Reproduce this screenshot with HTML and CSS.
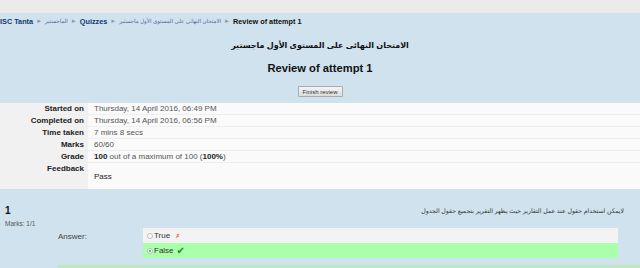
FILE: index.html
```html
<!DOCTYPE html>
<html lang="en">
<head>
<meta charset="utf-8"/>
<link rel="stylesheet" href="styles.css">
</head>
<body>
<div id="topbar"></div>
<div id="navbar">
    <a class="crumb main" href="#">ISC Tanta</a><span class="sep">&#9658;</span>
    <a class="crumb ar" href="#" dir="rtl">الماجستير</a><span class="sep">&#9658;</span>
    <a class="crumb main" href="#">Quizzes</a><span class="sep">&#9658;</span>
    <a class="crumb ar" href="#" dir="rtl">الامتحان النهائى على المستوى الأول ماجستير</a><span class="sep">&#9658;</span>
    <span class="crumb current">Review of attempt 1</span>
</div>
<div id="heading">
    <h2 dir="rtl">الامتحان النهائى على المستوى الأول ماجستير</h2>
    <h1>Review of attempt 1</h1>
    <button class="finish">Finish review</button>
</div>
<table id="summary">
    <tr><th>Started on</th><td>Thursday, 14 April 2016, 06:49 PM</td></tr>
    <tr><th>Completed on</th><td>Thursday, 14 April 2016, 06:56 PM</td></tr>
    <tr><th>Time taken</th><td>7 mins 8 secs</td></tr>
    <tr><th>Marks</th><td>60/60</td></tr>
    <tr><th>Grade</th><td><b>100</b> out of a maximum of 100 (<b>100%</b>)</td></tr>
    <tr class="feedback"><th>Feedback</th><td><p>Pass</p></td></tr>
</table>
<div id="question">
    <div class="qinfo">
        <div class="qno">1</div>
        <div class="marks">Marks: 1/1</div>
    </div>
    <div class="qbody">
        <p class="qtext" dir="rtl">لايمكن استخدام حقول عند عمل التقارير حيث يظهر التقرير بتجميع حقول الجدول</p>
        <div class="answer">
            <div class="prompt">Answer:</div>
            <div class="options">
                <div class="opt"><span class="radio"></span>True <span class="wrong">&#10007;</span></div>
                <div class="opt right"><span class="radio on"></span>False <span class="tick">&#10004;</span></div>
            </div>
        </div>
    </div>
</div>
<div id="outcome"></div>
</body>
</html>
```

FILE: styles.css
```css
html {
    font-family: "Liberation Sans", "DejaVu Sans", sans-serif;
    font-size: 8px;
    color: #222;
}
body {
    margin: 0;
    padding: 0;
    width: 640px;
    height: 268px;
    overflow: hidden;
    background: #d0e2ee;
}
#topbar {
    height: 12px;
    background: #ebebeb;
    border-bottom: 1px solid #e2ebf1;
}
#navbar {
    display: flex;
    align-items: center;
    height: 16px;
    font-size: 7.3px;
}
.crumb {
    text-decoration: none;
}
.main {
    color: #123a6c;
    font-weight: bold;
}
.ar {
    color: #4a6d96;
    font-size: 5.5px;
}
.current {
    color: #111;
    font-weight: bold;
}
.sep {
    color: #8a9aab;
    font-size: 6px;
    margin: 0 3px;
}
#heading {
    display: flex;
    flex-direction: column;
    align-items: center;
    box-sizing: border-box;
    padding-top: 11px;
    height: 74px;
}
#heading h2 {
    margin: 0;
    font-size: 8px;
    font-weight: bold;
    color: #111;
    line-height: 12px;
}
#heading h1 {
    margin: 10px 0 0 0;
    font-size: 11.2px;
    font-weight: bold;
    color: #111;
    line-height: 13px;
}
.finish {
    margin-top: 11px;
    width: 45px;
    height: 11px;
    padding: 0;
    font-family: inherit;
    font-size: 6px;
    color: #333;
    background: linear-gradient(#f4f4f4, #dcdcdc);
    border: 1px solid #aaa;
    border-radius: 1px;
}
#summary {
    width: 100%;
    border-collapse: collapse;
    background: #fafafa;
}
#summary th,
#summary td {
    height: 11px;
    padding-top: 0;
    padding-bottom: 0;
    line-height: 11px;
    vertical-align: middle;
    border-bottom: 1px solid #efefef;
}
#summary th {
    width: 83px;
    padding-right: 4px;
    text-align: right;
    background: #f1f1f1;
    color: #222;
    font-weight: bold;
}
#summary td {
    padding-left: 6px;
    color: #555;
}
#summary td b {
    color: #222;
}
#summary .feedback th,
#summary .feedback td {
    height: 26px;
    vertical-align: top;
    border-bottom: none;
}
#summary .feedback td p {
    margin: 8px 0 0 0;
    color: #222;
}
#question {
    display: flex;
    padding: 16px 0 0 5px;
}
.qinfo {
    width: 48px;
}
.qno {
    font-size: 10px;
    font-weight: bold;
    color: #111;
    line-height: 12px;
}
.marks {
    font-size: 6.5px;
    color: #555;
    margin-top: 3px;
}
.qbody {
    flex: 1;
    padding-right: 16px;
}
.qtext {
    margin: 1px 0 0 0;
    font-size: 6.2px;
    color: #333;
    line-height: 10px;
}
.answer {
    display: flex;
    margin-top: 12px;
}
.prompt {
    width: 85px;
    padding: 4px 0 0 5px;
    color: #444;
}
.options {
    flex: 1;
    margin-right: 6px;
}
.opt {
    display: flex;
    align-items: center;
    height: 15px;
    padding-left: 4px;
    background: #f3f3f3;
    color: #333;
}
.opt.right {
    height: 15px;
    background: #aaffaa;
}
.radio {
    width: 4px;
    height: 4px;
    border: 1px solid #bbb;
    border-radius: 50%;
    background: #fff;
    margin-right: 1px;
}
.radio.on {
    background: radial-gradient(#999 35%, #fff 45%);
}
.wrong {
    color: #f06040;
    font-size: 6px;
    margin-left: 5px;
}
.tick {
    color: #1a8a1a;
    font-size: 10px;
    margin-left: 3px;
}
#outcome {
    margin: 7px 0 0 58px;
    height: 4px;
    background: #bfe8c0;
}
```
